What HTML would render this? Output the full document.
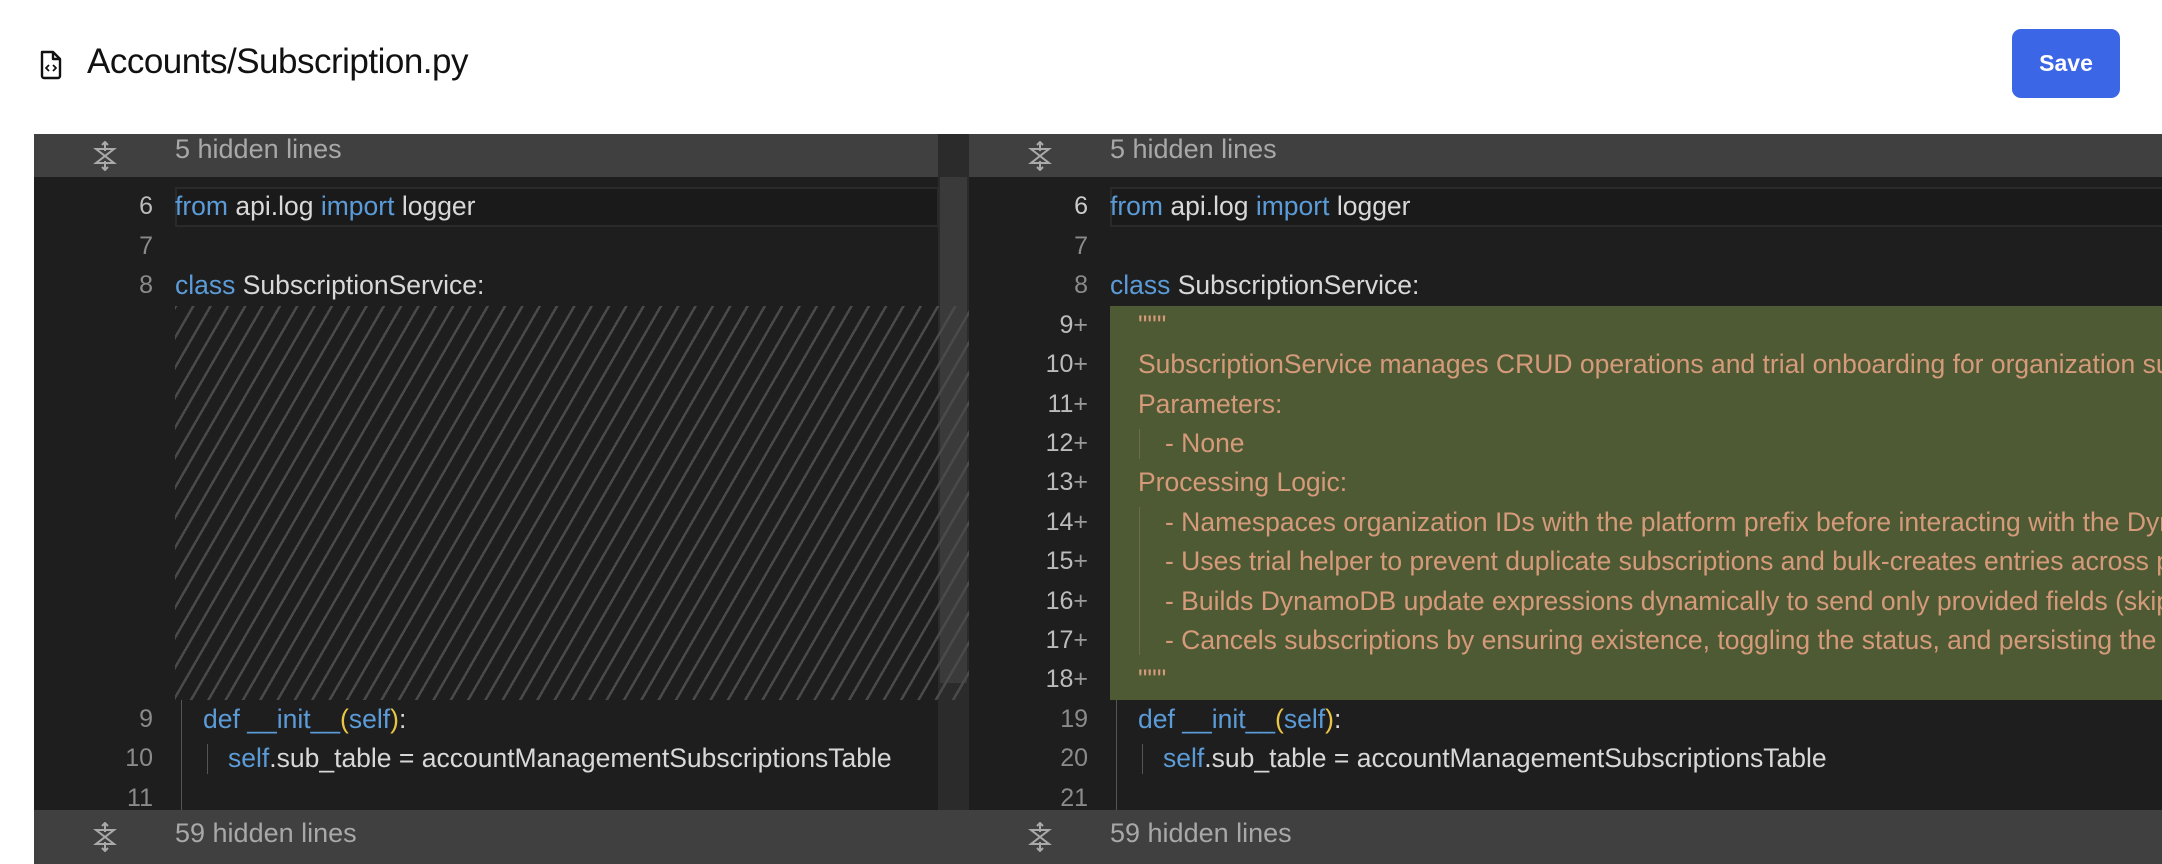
<!DOCTYPE html>
<html><head><meta charset="utf-8"><style>
*{margin:0;padding:0;box-sizing:border-box}
body{width:2162px;height:864px;overflow:hidden;background:#fff;font-family:"Liberation Sans",sans-serif;position:relative}
.title{position:absolute;left:87px;top:42px;font-size:35px;color:#111;letter-spacing:-0.5px}
.save{position:absolute;left:2012px;top:29px;width:108px;height:69px;background:#3b66e6;border-radius:9px;color:#fff;font-weight:bold;font-size:23px;display:flex;align-items:center;justify-content:center}
.pane{position:absolute;top:134px;height:730px;background:#1e1e1e;overflow:hidden}
.bar{position:absolute;left:0;right:0;height:43px;background:#404040;color:#a8a8a8;font-size:27px}
.bar span{position:absolute;top:0px}
.bar svg{position:absolute;top:7px}
.ln{position:absolute;font-size:25px;color:#8a8a8a;text-align:right;width:60px;height:39.4px;line-height:39.4px}
.code{position:absolute;font-size:26.5px;color:#d8d8d8;white-space:nowrap;height:39.4px;line-height:39.4px}
.k{color:#5b9bd8}.y{color:#e8c547}.s{color:#d49a7a}
.guide{position:absolute;width:1px;background:#555}
</style></head><body>
<svg style="position:absolute;left:39px;top:50px" width="24" height="30" viewBox="0 0 24 30" fill="none" stroke="#111" stroke-width="2.4" stroke-linejoin="round"><path d="M3 2h11l7 7v17a2 2 0 0 1-2 2H5a2 2 0 0 1-2-2z"/><path d="M14 2v7h7"/><path d="M10 15l-3 3 3 3M14 15l3 3-3 3" stroke-width="1.8"/></svg>
<div class="title">Accounts/Subscription.py</div>
<div class="save">Save</div>

<!-- left pane -->
<div class="pane" style="left:34px;width:935px">
  <div class="bar" style="top:0"><svg style="left:56px" width="30" height="30" viewBox="0 0 30 30" fill="none" stroke="#aaa" stroke-width="2"><path d="M6 8h18L6 22h18z"/><path d="M15 1v9M12 4l3-3 3 3M15 20v9M12 26l3 3 3-3"/></svg><span style="left:141px">5 hidden lines</span></div>
  <div style="position:absolute;left:141px;top:53px;width:764px;height:40px;background:#1a1a1a;border:2px solid #2a2a2a"></div>
  <div style="position:absolute;left:904px;top:0;width:31px;height:730px;background:#2b2b2b"></div>
  <div style="position:absolute;left:906px;top:43px;width:27px;height:506px;background:#3a3a3a"></div>
  <div style="position:absolute;left:141px;top:172px;width:794px;height:394px;background:repeating-linear-gradient(-60deg,rgba(0,0,0,0) 0 12.5px,#4a4a4a 12.5px 15px)"></div>
  <div class="ln" style="left:59px;top:53px;color:#bbb">6</div><div class="code" style="left:141px;top:53px"><span class="k">from</span> api.log <span class="k">import</span> logger</div>
  <div class="ln" style="left:59px;top:93px">7</div>
  <div class="ln" style="left:59px;top:132px">8</div><div class="code" style="left:141px;top:132px"><span class="k">class</span> SubscriptionService:</div>
  <div class="ln" style="left:59px;top:566px">9</div><div class="code" style="left:169px;top:566px"><span class="k">def</span> <span class="k">__init__</span><span class="y">(</span><span class="k">self</span><span class="y">)</span>:</div>
  <div class="ln" style="left:59px;top:605px">10</div><div class="code" style="left:194px;top:605px"><span class="k">self</span>.sub_table = accountManagementSubscriptionsTable</div>
  <div class="ln" style="left:59px;top:645px">11</div>
  <div class="guide" style="left:147px;top:566px;height:110px"></div>
  <div class="guide" style="left:173px;top:610px;height:30px"></div>
  <div class="bar" style="top:676px;height:54px"><svg style="left:56px;top:12px" width="30" height="30" viewBox="0 0 30 30" fill="none" stroke="#aaa" stroke-width="2"><path d="M6 8h18L6 22h18z"/><path d="M15 1v9M12 4l3-3 3 3M15 20v9M12 26l3 3 3-3"/></svg><span style="left:141px;top:8px">59 hidden lines</span></div>
</div>

<!-- arrow -->
<svg style="position:absolute;left:976px;top:316px" width="28" height="22" viewBox="0 0 28 22" fill="none" stroke="#ddd" stroke-width="2"><path d="M2 11h22M16 3l8 8-8 8"/></svg>

<!-- right pane -->
<div class="pane" style="left:969px;width:1193px">
  <div class="bar" style="top:0"><svg style="left:56px" width="30" height="30" viewBox="0 0 30 30" fill="none" stroke="#aaa" stroke-width="2"><path d="M6 8h18L6 22h18z"/><path d="M15 1v9M12 4l3-3 3 3M15 20v9M12 26l3 3 3-3"/></svg><span style="left:141px">5 hidden lines</span></div>
  <div style="position:absolute;left:141px;top:53px;width:1060px;height:40px;background:#1a1a1a;border:2px solid #2a2a2a"></div>
  <div style="position:absolute;left:141px;top:172px;width:1060px;height:394px;background:#4e5a33"></div>
  <div class="ln" style="left:59px;top:53px;color:#ccc">6</div><div class="code" style="left:141px;top:53px"><span class="k">from</span> api.log <span class="k">import</span> logger</div>
  <div class="ln" style="left:59px;top:93px">7</div>
  <div class="ln" style="left:59px;top:132px">8</div><div class="code" style="left:141px;top:132px"><span class="k">class</span> SubscriptionService:</div>
  <div class="ln" style="left:59px;top:172px;color:#bbb">9<span style="color:#999">+</span></div><div class="code s" style="left:169px;top:172px">"""</div>
  <div class="ln" style="left:59px;top:211px;color:#bbb">10<span style="color:#999">+</span></div><div class="code s" style="left:169px;top:211px">SubscriptionService manages CRUD operations and trial onboarding for organization subscriptions.</div>
  <div class="ln" style="left:59px;top:251px;color:#bbb">11<span style="color:#999">+</span></div><div class="code s" style="left:169px;top:251px">Parameters:</div>
  <div class="ln" style="left:59px;top:290px;color:#bbb">12<span style="color:#999">+</span></div><div class="code s" style="left:196px;top:290px">- None</div>
  <div class="ln" style="left:59px;top:329px;color:#bbb">13<span style="color:#999">+</span></div><div class="code s" style="left:169px;top:329px">Processing Logic:</div>
  <div class="ln" style="left:59px;top:369px;color:#bbb">14<span style="color:#999">+</span></div><div class="code s" style="left:196px;top:369px">- Namespaces organization IDs with the platform prefix before interacting with the DynamoDB table.</div>
  <div class="ln" style="left:59px;top:408px;color:#bbb">15<span style="color:#999">+</span></div><div class="code s" style="left:196px;top:408px">- Uses trial helper to prevent duplicate subscriptions and bulk-creates entries across products.</div>
  <div class="ln" style="left:59px;top:448px;color:#bbb">16<span style="color:#999">+</span></div><div class="code s" style="left:196px;top:448px">- Builds DynamoDB update expressions dynamically to send only provided fields (skipping None).</div>
  <div class="ln" style="left:59px;top:487px;color:#bbb">17<span style="color:#999">+</span></div><div class="code s" style="left:196px;top:487px">- Cancels subscriptions by ensuring existence, toggling the status, and persisting the change.</div>
  <div class="ln" style="left:59px;top:526px;color:#bbb">18<span style="color:#999">+</span></div><div class="code s" style="left:169px;top:526px">"""</div>
  <div class="guide" style="left:170px;top:295px;height:30px;background:#6b6b50"></div>
  <div class="guide" style="left:170px;top:373px;height:148px;background:#6b6b50"></div>
  <div class="ln" style="left:59px;top:566px">19</div><div class="code" style="left:169px;top:566px"><span class="k">def</span> <span class="k">__init__</span><span class="y">(</span><span class="k">self</span><span class="y">)</span>:</div>
  <div class="ln" style="left:59px;top:605px">20</div><div class="code" style="left:194px;top:605px"><span class="k">self</span>.sub_table = accountManagementSubscriptionsTable</div>
  <div class="ln" style="left:59px;top:645px">21</div>
  <div class="guide" style="left:147px;top:566px;height:110px"></div>
  <div class="guide" style="left:173px;top:610px;height:30px"></div>
  <div class="bar" style="top:676px;height:54px"><svg style="left:56px;top:12px" width="30" height="30" viewBox="0 0 30 30" fill="none" stroke="#aaa" stroke-width="2"><path d="M6 8h18L6 22h18z"/><path d="M15 1v9M12 4l3-3 3 3M15 20v9M12 26l3 3 3-3"/></svg><span style="left:141px;top:8px">59 hidden lines</span></div>
</div>
</body></html>
